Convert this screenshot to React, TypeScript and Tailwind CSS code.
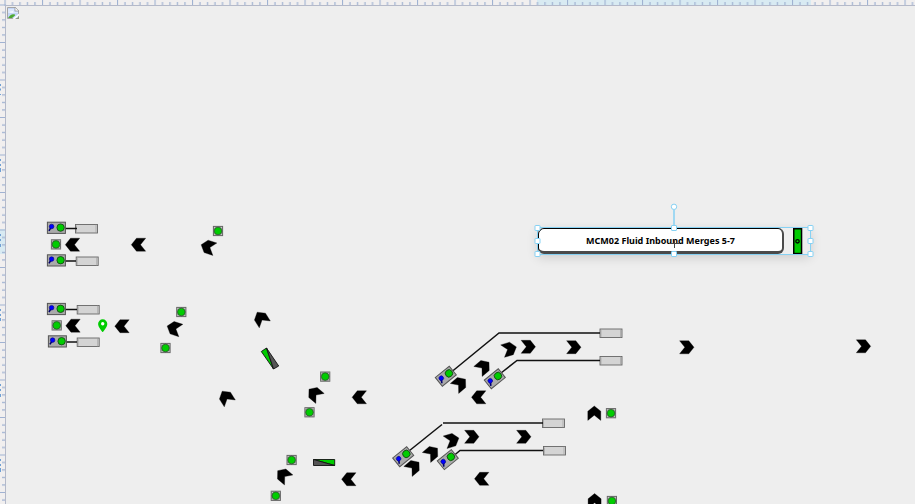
import React from "react";

type Placed = { x: number; y: number; angle?: number };

const arrows: Placed[] = [
  { x: 72.5, y: 244.7, angle: 180 },
  { x: 138.5, y: 244.7, angle: 180 },
  { x: 208, y: 247, angle: 198 },
  { x: 73, y: 325.7, angle: 180 },
  { x: 122, y: 326.2, angle: 180 },
  { x: 174, y: 328.3, angle: 198 },
  { x: 261, y: 318.3, angle: 238 },
  { x: 226, y: 397.3, angle: 238 },
  { x: 314.5, y: 393.8, angle: 220 },
  { x: 359.3, y: 397.3, angle: 180 },
  { x: 283.2, y: 475.3, angle: 220 },
  { x: 348.8, y: 479.2, angle: 180 },
  { x: 509.5, y: 349, angle: -17 },
  { x: 528.3, y: 346.8, angle: 0 },
  { x: 573.8, y: 347.2, angle: 0 },
  { x: 483.5, y: 366.8, angle: -40 },
  { x: 460, y: 383.8, angle: -40 },
  { x: 478.7, y: 397.3, angle: 180 },
  { x: 594.3, y: 413.2, angle: -90 },
  { x: 452, y: 440.2, angle: -17 },
  { x: 471.8, y: 436.8, angle: 0 },
  { x: 523.8, y: 436.8, angle: 0 },
  { x: 432, y: 452.8, angle: -40 },
  { x: 413.5, y: 466.8, angle: -40 },
  { x: 481.7, y: 478.8, angle: 180 },
  { x: 594.6, y: 500.8, angle: -90 },
  { x: 686.8, y: 347.3, angle: 0 },
  { x: 863.5, y: 346.3, angle: 0 },
];

const sensors: Placed[] = [
  { x: 218, y: 231 },
  { x: 56, y: 244.4 },
  { x: 56.7, y: 325.4 },
  { x: 181.3, y: 312 },
  { x: 165.5, y: 348 },
  { x: 325.2, y: 376.6 },
  { x: 309.5, y: 412.3 },
  { x: 291.6, y: 460 },
  { x: 275.8, y: 495.8 },
  { x: 611, y: 413.2 },
  { x: 611.9, y: 501 },
];

const stations: Placed[] = [
  { x: 56.4, y: 227.8 },
  { x: 56.4, y: 260.4 },
  { x: 56.4, y: 309 },
  { x: 57.4, y: 341.4 },
  { x: 445.8, y: 376.2, angle: -39 },
  { x: 494.8, y: 378.8, angle: -39 },
  { x: 403.2, y: 456.7, angle: -39 },
  { x: 447.8, y: 459.6, angle: -39 },
];

const trays: Placed[] = [
  { x: 75, y: 224.5 },
  { x: 75.7, y: 257 },
  { x: 76.7, y: 305.5 },
  { x: 76.7, y: 338 },
  { x: 599.5, y: 329 },
  { x: 599.5, y: 356.5 },
  { x: 542, y: 419 },
  { x: 543, y: 446.5 },
];

const conveyors = [
  "65,228.5 77,228.5",
  "65,261 76,261",
  "65,309.5 77,309.5",
  "66,342 77,342",
  "452,371.500 499,333 600,333",
  "501,373 517,360.5 600,360.5",
  "409,451 442,424.500",
  "443,423 543,423",
  "454,455.5 460,450.5 543,450.5",
];

const handles = [
  [537.5, 228], [674, 228], [810.5, 228],
  [537.5, 241], [810.5, 241],
  [537.5, 254], [674, 254], [810.5, 254],
];

function Arrow({ x, y, angle = 0 }: Placed) {
  return (
    <polygon
      points="7.200,0 2,-6.500 -7.200,-6.500 -2,0 -7.200,6.500 2,6.500"
      stroke="#000"
      strokeWidth={0.3}
      transform={`translate(${x} ${y}) rotate(${angle})`}
    />
  );
}

function Sensor({ x, y }: Placed) {
  return (
    <g transform={`translate(${x} ${y})`}>
      <rect x={-4.6} y={-4.6} width={9.2} height={9.2} fill="#aaa" stroke="#666" />
      <path d="M-4 -4L4 4M4 -4L-4 4" stroke="#ddd" strokeWidth={0.6} />
      <circle r={3.8} fill="#0c0" stroke="#2a4a2a" strokeWidth={0.7} />
    </g>
  );
}

function Station({ x, y, angle = 0 }: Placed) {
  return (
    <g transform={`translate(${x} ${y}) rotate(${angle})`}>
      <rect x={-9} y={-5.6} width={18} height={11.2} fill="#aaa" stroke="#555" />
      <path d="M-5 -1L-7.5 3" stroke="#00006a" strokeWidth={1.6} />
      <circle cx={-4.8} cy={-1.3} r={2.3} fill="#00f" stroke="#000080" strokeWidth={0.6} />
      <circle cx={4.2} cy={-0.2} r={3.7} fill="#0c0" stroke="#143c14" strokeWidth={0.8} />
    </g>
  );
}

function Tray({ x, y }: Placed) {
  return (
    <g transform={`translate(${x} ${y})`}>
      <rect x={0.5} y={0} width={22} height={8.5} fill="#d4d4d4" stroke="#666" strokeWidth={0.9} />
      <path d="M1.5 1V8M21 0V8.5" stroke="#999" strokeWidth={0.6} />
    </g>
  );
}

function Ruler({ vertical = false }: { vertical?: boolean }) {
  const id = vertical ? "ticks-left" : "ticks-top";
  const minor = [7.5, 15, 22.5, 30];
  return (
    <svg className="block size-full" aria-hidden="true">
      <defs>
        <pattern
          id={id}
          x={vertical ? 0 : 4.5}
          y={vertical ? 4.5 : 0}
          width={vertical ? 6 : 37.5}
          height={vertical ? 37.5 : 6}
          patternUnits="userSpaceOnUse"
        >
          <path
            d={
              vertical
                ? "M0 0.5H6" + minor.map((m) => `M2 ${m + 0.5}H6`).join("")
                : "M0.5 0V6" + minor.map((m) => `M${m + 0.5} 2V6`).join("")
            }
            stroke="#9fb2d2"
            strokeWidth={1.2}
          />
        </pattern>
      </defs>
      {vertical ? (
        <rect y={229} width={6} height={25} fill="#d8eaf2" />
      ) : (
        <rect x={537} width={274} height={6} fill="#d8eaf2" />
      )}
      <rect width="100%" height="100%" fill={`url(#${id})`} />
      {vertical && (
        <path
          d="M.5 84v2M.5 88.500v2M.5 94v1M.5 159v2M.5 164v2M.5 168v4M.5 234v2M.5 239v2M.5 244v3M.5 309v2M.5 314v2M.5 318v3M.5 384v2M.5 389v2M.5 394v3M.5 459v2M.5 464v2M.5 468v4"
          stroke="#6fa0d4"
        />
      )}
      <path d={vertical ? "M5.5 5V4000" : "M5 5.500H8000"} stroke="#b4b9c9" />
    </svg>
  );
}

function BrokenImage() {
  return (
    <svg className="absolute left-px top-px size-3" viewBox="0 0 12 12" role="img" aria-label="Background image">
      <path d="M.5.5H8L11.500 4V11.500H.5Z" fill="#c3d5f6" stroke="#a5a5a5" />
      <path d="M1 2H7V5H11V6H1Z" fill="#dce7fb" />
      <path d="M2.500 5.500Q3 4 4.500 4.500Q6 3.500 6.500 5.500Z" fill="#fff" />
      <path d="M1 11Q4 6 8 7.500L8 8.500L5 11Z" fill="#4ea832" />
      <path d="M8 0V4H12Z" fill="#f4f4f4" stroke="#999" strokeWidth={0.7} />
      <path d="M5.500 12L12 6.500V8.500L8 12Z" fill="#fff" />
      <path d="M9 12L12 9.500V12Z" fill="#8f997f" />
    </svg>
  );
}

function Diagram() {
  return (
    <svg className="absolute inset-0 size-full" role="img" aria-label="Conveyor diagram">
      <g transform="translate(-6 -6)">
        {trays.map((t, i) => <Tray key={i} {...t} />)}
        <g fill="none" stroke="#111" strokeWidth={1.5}>
          {conveyors.map((points) => <polyline key={points} points={points} />)}
        </g>
        {stations.map((s, i) => <Station key={i} {...s} />)}
        {sensors.map((s, i) => <Sensor key={i} {...s} />)}
        {arrows.map((a, i) => <Arrow key={i} {...a} />)}
        <path
          d="M102.700 319.300a4.600 4.600 0 0 0-4.600 4.600c0 3.300 4.600 8.200 4.600 8.200s4.600-4.900 4.600-8.200a4.600 4.600 0 0 0-4.600-4.600Z"
          fill="#0c0"
        />
        <circle cx={102.7} cy={323.8} r={1.7} fill="#fff" />
        <g stroke="#111" strokeWidth={0.9} strokeLinejoin="round">
          <polygon points="261.300,351.500 266.500,348 273.500,369" fill="#0c0" />
          <polygon points="266.500,348 278.700,366 273.500,369" fill="#555" />
          <polygon points="313.500,459.500 334.700,459.500 334.700,465.500" fill="#0c0" />
          <polygon points="313.500,459.500 313.500,465.500 334.700,465.500" fill="#555" />
        </g>
      </g>
    </svg>
  );
}

function Selection() {
  return (
    <svg className="pointer-events-none absolute inset-0 size-full" aria-hidden="true">
      <g transform="translate(-6 -6)">
        <rect x={793.75} y={228.75} width={7.8} height={24.8} fill="#0c0" stroke="#000" strokeWidth={1.5} />
        <circle cx={797.5} cy={241.3} r={1.7} fill="none" stroke="#000" strokeWidth={1.3} />
        <path d="M674.500 239V248M669 243.500H680" stroke="#444" />
        <g stroke="#86d1f3">
          <path d="M674 210V228" strokeWidth={1.5} />
          <rect x={537.5} y={227.5} width={273} height={27} fill="none" />
          <g fill="#fff">
            <circle cx={674} cy={206.8} r={2.7} />
            {handles.map(([x, y]) => (
              <rect key={`${x}-${y}`} x={x - 2.5} y={y - 2.5} width={5} height={5} rx={0.5} />
            ))}
          </g>
        </g>
      </g>
    </svg>
  );
}

export default function App() {
  return (
    <div className="grid h-screen grid-cols-[6px_minmax(0,1fr)] grid-rows-[6px_minmax(0,1fr)] overflow-hidden bg-[#eeeeee]">
      <div className="col-span-2 bg-[#f1efef]">
        <Ruler />
      </div>
      <div className="relative bg-[#f1efef]">
        <div className="absolute inset-x-0 -top-1.5 bottom-0">
          <Ruler vertical />
        </div>
      </div>
      <main className="relative overflow-hidden">
        <BrokenImage />
        <Diagram />
        <div className="absolute left-[532px] top-[222px] w-[272px] bg-[#eeeeee] shadow-[0_3px_12px_rgba(0,0,0,0.16)]">
          <h1 className="flex h-[26px] w-[246px] items-center justify-center rounded-md border border-r-2 border-b-3 border-black border-r-[#4a4a4a] border-b-[#4a4a4a] bg-white pt-0.5 font-['Noto_Sans',sans-serif] text-[9px] font-bold text-black">
            MCM02 Fluid Inbound Merges 5-7
          </h1>
        </div>
        <Selection />
      </main>
    </div>
  );
}
